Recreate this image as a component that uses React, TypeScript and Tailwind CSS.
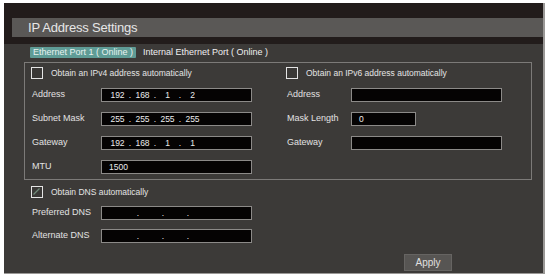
import React from "react";

const font = { fontFamily: '"Liberation Sans", Arial, sans-serif' };

function Checkbox({ checked = false }: { checked?: boolean }) {
  return (
    <div className="relative w-[12px] h-[12px] border-[1.5px] border-[#e4e4e4] bg-[#3a3836] shrink-0">
      {checked && (
        <svg className="absolute inset-0" width="9" height="9" viewBox="0 0 9 9">
          <path d="M1.5 7.5 L7.5 1.5" stroke="#6f8a78" strokeWidth="1.2" />
        </svg>
      )}
    </div>
  );
}

function IpField({ parts, empty = false }: { parts: string[]; empty?: boolean }) {
  return (
    <div
      className={`flex items-center w-[151px] h-[14px] bg-[#050303] border border-[#8c8a88] text-[8.5px] text-[#ececec] leading-none ${
        empty ? "pl-[13px]" : "pl-[5px]"
      }`}
    >
      {parts.map((p, i) => (
        <React.Fragment key={i}>
          <span className="w-[21px] text-center">{p}</span>
          {i < 3 && <span className="w-[4px] text-center">.</span>}
        </React.Fragment>
      ))}
    </div>
  );
}

function TextField({ value = "", width = "w-[151px]" }: { value?: string; width?: string }) {
  return (
    <div
      className={`flex items-center ${width} h-[14px] bg-[#050303] border border-[#8c8a88] pl-[7px] text-[8.5px] text-[#ececec] leading-none`}
    >
      {value}
    </div>
  );
}

function Row({ label, labelWidth, children }: { label: string; labelWidth: string; children: React.ReactNode }) {
  return (
    <div className="flex items-center h-[14px]">
      <span className={`${labelWidth} pl-[1px] text-[9px] text-[#e2e2e2]`}>{label}</span>
      {children}
    </div>
  );
}

export default function App() {
  return (
    <div className="w-[550px] h-[279px] bg-white pt-[3px] pl-[4px]" style={font}>
      <div className="w-[541px] h-[271px] flex flex-col border-r-2 border-b border-[#9a9896] bg-[#3c3a38]">
        {/* header */}
        <div className="bg-[#221c1b] pt-[15px] pl-[8px] pb-[7px]">
          <div className="h-[19px] bg-[#5a5856] flex items-center pl-[16px]">
            <span
              className="text-[13px] text-[#e6e6e6] tracking-[-0.2px]"
              style={{ fontFamily: '"Liberation Sans Narrow", "Liberation Sans", Arial, sans-serif' }}
            >
              IP Address Settings
            </span>
          </div>
        </div>

        {/* body */}
        <div className="flex-1 flex flex-col pl-[20px]">
          <div className="flex items-center mt-[3px] ml-[6px] h-[11px] text-[9px] leading-none">
            <span className="h-[11px] flex items-center px-[3px] bg-[#5f9c96] text-[#e8f2f0] rounded-[1px]">
              Ethernet Port 1 ( Online )
            </span>
            <span className="ml-[7px] text-[#f0f0f0]">Internal Ethernet Port ( Online )</span>
          </div>

          <div className="mt-[4px] w-[508px] h-[118px] border border-[#7c7a78] flex pl-[6px] pt-[4px]">
            <div className="w-[255px] flex flex-col">
              <div className="flex items-center h-[12px]">
                <Checkbox />
                <span className="ml-[8px] text-[8.5px] text-[#e4e4e4]">Obtain an IPv4 address automatically</span>
              </div>
              <div className="flex flex-col gap-[10px] mt-[9px]">
                <Row label="Address" labelWidth="w-[70px]">
                  <IpField parts={["192", "168", "1", "2"]} />
                </Row>
                <Row label="Subnet Mask" labelWidth="w-[70px]">
                  <IpField parts={["255", "255", "255", "255"]} />
                </Row>
                <Row label="Gateway" labelWidth="w-[70px]">
                  <IpField parts={["192", "168", "1", "1"]} />
                </Row>
                <Row label="MTU" labelWidth="w-[70px]">
                  <TextField value="1500" />
                </Row>
              </div>
            </div>
            <div className="flex flex-col">
              <div className="flex items-center h-[12px]">
                <Checkbox />
                <span className="ml-[8px] text-[8.5px] text-[#e4e4e4]">Obtain an IPv6 address automatically</span>
              </div>
              <div className="flex flex-col gap-[10px] mt-[9px]">
                <Row label="Address" labelWidth="w-[65px]">
                  <TextField />
                </Row>
                <Row label="Mask Length" labelWidth="w-[65px]">
                  <TextField value="0" width="w-[65px]" />
                </Row>
                <Row label="Gateway" labelWidth="w-[65px]">
                  <TextField />
                </Row>
              </div>
            </div>
          </div>

          <div className="ml-[7px] mt-[6px] flex flex-col">
            <div className="flex items-center h-[12px]">
              <Checkbox checked />
              <span className="ml-[8px] text-[8.5px] text-[#e4e4e4]">Obtain DNS automatically</span>
            </div>
            <div className="flex flex-col gap-[9px] mt-[8px]">
              <Row label="Preferred DNS" labelWidth="w-[70px]">
                <IpField parts={["", "", "", ""]} empty />
              </Row>
              <Row label="Alternate DNS" labelWidth="w-[70px]">
                <IpField parts={["", "", "", ""]} empty />
              </Row>
            </div>
          </div>

          <div className="flex-1" />
          <div className="flex pl-[380px] pb-[2px]">
            <button className="w-[48px] h-[17px] bg-[#575553] border border-[#666462] text-[10px] text-[#e0e0e0] leading-none">
              Apply
            </button>
          </div>
        </div>
      </div>
    </div>
  );
}
